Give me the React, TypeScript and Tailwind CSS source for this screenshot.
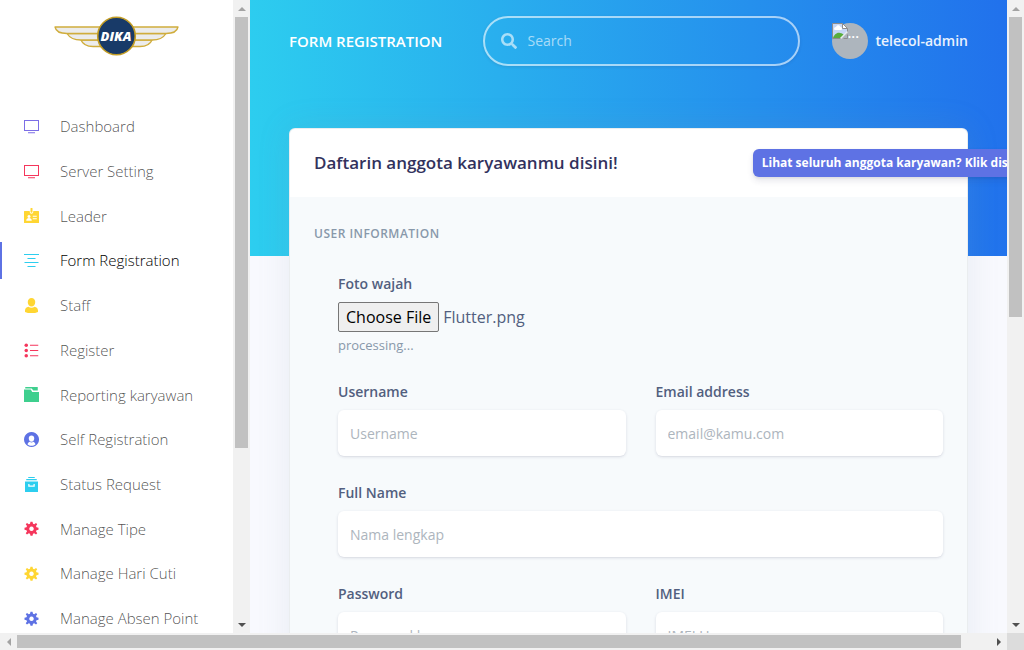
import { useId, useRef, useState } from "react";
import type { ReactNode } from "react";

function Svg({ children, className }: { children: ReactNode; className: string }) {
  return (
    <svg viewBox="0 0 60 60" aria-hidden="true" className={`size-[15px] shrink-0 ${className}`} fill="currentColor">
      {children}
    </svg>
  );
}

const Screen = () => (
  <>
    <path fillRule="evenodd" d="M0 4h60v44H0zM4 8v36h52V8z" />
    <path d="M16 53h28v4H16z" />
  </>
);
const Badge = () => (
  <path
    fillRule="evenodd"
    d="M2 12h21v4a7 7 0 0 0 14 0v-4h21a2 2 0 0 1 2 2v44a2 2 0 0 1-2 2H2a2 2 0 0 1-2-2V14a2 2 0 0 1 2-2zM26 3a4 4 0 0 1 8 0v12a4 4 0 0 1-8 0zM20 28a6 6 0 1 0 .1 0zM9 51h22c0-8-4-11-11-11S9 43 9 51zM35 31v4h16v-4zM35 41v4h16v-4z"
  />
);
const Lines = () => (
  <path d="M0 4h60v4H0zM14 20h32v4H14zM2 36h56v4H2zM14 52h32v4H14z" />
);
const Person = () => (
  <>
    <path d="M30 0c9 0 15 7 15 16 0 10-6 18-15 18s-15-8-15-18C15 7 21 0 30 0z" />
    <path d="M18 35c7 5 17 5 24 0 9 2 14 7 14 15v6c-7 4-16 4-26 4s-19 0-26-4v-6c0-8 5-13 14-15z" />
  </>
);
const Bullets = () => (
  <>
    <circle cx="9" cy="9" r="7" />
    <circle cx="9" cy="30" r="7" />
    <circle cx="9" cy="51" r="7" />
    <path d="M24 7h33v4H24zM24 28h33v4H24zM24 49h33v4H24z" />
  </>
);
const Folder = () => (
  <>
    <path d="M5 0h50v14H37l-6-8H5z" />
    <path d="M0 10h27l6 10h27v40H0z" />
  </>
);
const UserCircle = () => (
  <path
    fillRule="evenodd"
    d="M30 0a30 30 0 1 0 .1 0zM30 14c7 0 11 5 11 11 0 7-4 14-11 14s-11-7-11-14c0-6 4-11 11-11zM14 49c2-7 6-9 9-10 4 4 10 4 14 0 3 1 7 3 9 10-8 8-24 8-32 0z"
  />
);
const Archive = () => (
  <path
    fillRule="evenodd"
    d="M17 0h26v4H17zM9 8h42v5H9zM4 18h52v42H4zM17 28v11h26V28h-5v6H22v-6z"
  />
);
const Gear = () => (
  <path
    fillRule="evenodd"
    d="M26 3h8l2 8 5 2 7-5 5 5-5 7 2 5 8 2v8l-8 2-2 5 5 7-5 5-7-5-5 2-2 8h-8l-2-8-5-2-7 5-5-5 5-7-2-5-8-2v-8l8-2 2-5-5-7 5-5 7 5 5-2zM30 22a9 9 0 1 0 .1 0z"
  />
);

const items = [
  { label: "Dashboard", color: "text-[#7c6ee6]", icon: <Screen /> },
  { label: "Server Setting", color: "text-[#f5365c]", icon: <Screen /> },
  { label: "Leader", color: "text-[#ffd633]", icon: <Badge /> },
  { label: "Form Registration", color: "text-[#2dceef]", icon: <Lines />, active: true },
  { label: "Staff", color: "text-[#ffd633]", icon: <Person /> },
  { label: "Register", color: "text-[#f5365c]", icon: <Bullets /> },
  { label: "Reporting karyawan", color: "text-[#3ecf8e]", icon: <Folder /> },
  { label: "Self Registration", color: "text-[#5e72e4]", icon: <UserCircle /> },
  { label: "Status Request", color: "text-[#2dceef]", icon: <Archive /> },
  { label: "Manage Tipe", color: "text-[#f5365c]", icon: <Gear /> },
  { label: "Manage Hari Cuti", color: "text-[#ffd633]", icon: <Gear /> },
  { label: "Manage Absen Point", color: "text-[#5e72e4]", icon: <Gear /> },
];

function Logo() {
  return (
    <svg viewBox="0 0 126 40" role="img" aria-label="DIKA" className="h-10 w-[126px]">
      <g fill="#ececec" stroke="#d0ad3c" strokeWidth="1.3" strokeLinejoin="round">
        <path d="M46 24H27c2 5 7 6.500 12 6.500h8zM79 24h19c-2 5-7 6.500-12 6.500h-8z" />
        <path d="M46 17.500H13c3 5 8 6.500 14 6.500h19zM79 17.500h33c-3 5-8 6.500-14 6.500H79z" />
        <path d="M46 11H1c1 5 7 6.500 12 6.500h33zM79 11h45c-1 5-7 6.500-12 6.500H79z" />
      </g>
      <circle cx="62.500" cy="20" r="18.800" fill="#183a68" stroke="#c39d25" strokeWidth="1.600" />
      <text x="62" y="25" textAnchor="middle" fill="#fff" fontSize="13" fontWeight="800" fontStyle="italic" fontFamily="Open Sans, sans-serif">
        DIKA
      </text>
    </svg>
  );
}

function Arrow({ d, dim }: { d: string; dim?: boolean }) {
  return (
    <span className="flex size-[17px] shrink-0 items-center justify-center">
      <svg viewBox="0 0 8 8" aria-hidden="true" className={dim ? "size-2 text-[#a3a3a3]" : "size-2 text-[#505050]"} fill="currentColor">
        <path d={d} />
      </svg>
    </span>
  );
}

function VerticalBar({ thumb }: { thumb: string }) {
  return (
    <div aria-hidden="true" className="flex w-[17px] shrink-0 flex-col bg-[#f1f1f1]">
      <Arrow d="M0 6h8L4 2z" dim />
      <div className="min-h-0 flex-1 px-0.5">
        <div className={`bg-[#c1c1c1] ${thumb}`} />
      </div>
      <Arrow d="M0 2h8L4 6z" />
    </div>
  );
}

function HorizontalBar() {
  return (
    <div aria-hidden="true" className="flex h-[17px] shrink-0 bg-[#f1f1f1]">
      <Arrow d="M6 0v8L2 4z" dim />
      <div className="min-w-0 flex-1 py-0.5">
        <div className="h-full w-[97%] bg-[#c1c1c1]" />
      </div>
      <Arrow d="M2 0v8l4-4z" />
      <span className="w-[17px] bg-[#dcdcdc]" />
    </div>
  );
}

function Field({ label, placeholder, type = "text", wide }: { label: string; placeholder: string; type?: string; wide?: boolean }) {
  const id = useId();
  return (
    <div className={wide ? "col-span-2" : ""}>
      <label htmlFor={id} className="mb-2 block text-sm leading-[21px] font-semibold text-[#525f7f]">
        {label}
      </label>
      <input
        id={id}
        type={type}
        placeholder={placeholder}
        className="block h-[46px] w-full rounded-md bg-white px-3 text-sm text-[#8898aa] shadow-[0_1px_3px_rgba(50,50,93,0.15),0_1px_0_rgba(0,0,0,0.02)] outline-none placeholder:text-[#adb5bd]"
      />
    </div>
  );
}

function FileField() {
  const input = useRef<HTMLInputElement>(null);
  const [name, setName] = useState("Flutter.png");
  return (
    <div>
      <label htmlFor="photo" className="mb-2 block text-sm leading-[21px] font-semibold">
        Foto wajah
      </label>
      <div className="relative flex items-center gap-1 text-base leading-6">
        <input
          ref={input}
          id="photo"
          type="file"
          tabIndex={-1}
          className="sr-only"
          onChange={(e) => setName(e.target.files?.[0]?.name ?? name)}
        />
        <button
          type="button"
          onClick={() => input.current?.click()}
          className="h-[30px] rounded-xs border border-[#767676] bg-[#efefef] px-[7px] text-black"
        >
          Choose File
        </button>
        <span>{name}</span>
      </div>
      <p className="mt-[3px] text-[13px] leading-5 text-[#8898aa]">processing...</p>
    </div>
  );
}

function Sidebar() {
  return (
    <aside className="flex w-[250px] shrink-0 bg-white">
      <div className="min-w-0 flex-1 overflow-hidden">
        <a href="#home" className="flex justify-center pt-4">
          <Logo />
        </a>
        <nav className="mt-[52px]">
          <ul className="flex h-[529px] flex-col justify-between">
            {items.map((item) => (
              <li key={item.label}>
                <a
                  href="#page"
                  aria-current={item.active ? "page" : undefined}
                  className={
                    item.active
                      ? "flex h-[37px] items-center gap-[21px] border-l-2 border-[#5e72e4] pl-[22px] text-[15px] font-light text-black"
                      : "flex h-[37px] items-center gap-[21px] pl-6 text-[15px] font-light text-black/70"
                  }
                >
                  <Svg className={item.color}>{item.icon}</Svg>
                  {item.label}
                </a>
              </li>
            ))}
          </ul>
        </nav>
      </div>
      <VerticalBar thumb="h-[72%]" />
    </aside>
  );
}

function Avatar() {
  return (
    <span className="relative block size-9 rounded-full bg-[#adb5bd]">
      <svg viewBox="0 0 16 16" aria-hidden="true" className="absolute top-0 left-0 size-4">
        <path d="M.5.500h10l5 5v3l-7 7h-8z" fill="#c6d7f5" />
        <path d="M2.500 7c-1-2 0-3 1.500-3 1-2.500 4-2 4.500 0 2 0 2 3 .5 3z" fill="#fff" />
        <path d="M1 15c1-3 4-6 7-5 2 0 3 1 4 2l-3.500 3z" fill="#58ad3c" />
        <path d="M15.500 8.500l-7 7" stroke="#e9ecef" strokeWidth="1.500" />
        <path d="M8.500 15.500H.5V.500h10l5 5v3M15.500 11.500v4h-4" fill="none" stroke="#8d8d8d" />
        <path d="M10.500.500v5h5z" fill="#fff" stroke="#8d8d8d" />
      </svg>
      <span className="absolute top-0 left-4 text-sm leading-5 font-semibold text-white">...</span>
    </span>
  );
}

function Header() {
  return (
    <header className="flex h-[82px] items-center px-[39px] text-white">
      <h1 className="text-[15px] font-semibold whitespace-nowrap uppercase">
        <a href="#form">Form Registration</a>
      </h1>
      <label className="ml-auto flex h-[50px] w-[317px] items-center gap-[11px] rounded-full border-2 border-white/60 px-4 text-white/60 shadow-[0_1px_3px_rgba(50,50,93,0.15)]">
        <svg viewBox="0 0 512 512" aria-hidden="true" className="size-4 shrink-0" fill="currentColor">
          <path d="M505 442.700L405.300 343c-4.500-4.500-10.600-7-17-7H372c27.600-35.300 44-79.700 44-128C416 93.100 322.900 0 208 0S0 93.100 0 208s93.100 208 208 208c48.300 0 92.700-16.400 128-44v16.300c0 6.400 2.500 12.500 7 17l99.700 99.700c9.400 9.400 24.600 9.400 33.900 0l28.300-28.300c9.400-9.400 9.400-24.600.1-34zM208 336c-70.700 0-128-57.200-128-128 0-70.700 57.200-128 128-128 70.700 0 128 57.200 128 128 0 70.700-57.200 128-128 128z" />
        </svg>
        <input type="search" aria-label="Search" placeholder="Search" className="min-w-0 flex-1 bg-transparent text-sm outline-none placeholder:text-white/60" />
      </label>
      <button type="button" className="ml-8 flex items-center gap-2 text-sm font-semibold text-white/90">
        <Avatar />
        telecol-admin
      </button>
    </header>
  );
}

export default function App() {
  return (
    <div className="flex h-screen flex-col overflow-hidden font-['Open_Sans',sans-serif] text-[#525f7f]">
      <div className="flex min-h-0 flex-1">
        <Sidebar />
        <main className="min-w-0 flex-1 overflow-hidden bg-[#f8f9fe] bg-[linear-gradient(87deg,#2dceef,#2171ec)] bg-[length:100%_256px] bg-no-repeat">
          <Header />
          <section className="mx-[39px] mt-[46px] rounded-md border border-black/5 bg-[#f7fafc] shadow-[0_0_32px_rgba(136,152,170,0.15)]">
            <div className="flex h-[68px] items-center justify-between rounded-t-md bg-white px-6">
              <h2 className="text-[17px] font-semibold whitespace-nowrap text-[#32325d]">Daftarin anggota karyawanmu disini!</h2>
              <a
                href="#members"
                className="-mr-[89px] rounded-md bg-[#5e72e4] px-[9px] py-1 text-xs leading-5 font-bold whitespace-nowrap text-white shadow-[0_4px_6px_rgba(50,50,93,0.11),0_1px_3px_rgba(0,0,0,0.08)]"
              >
                Lihat seluruh anggota karyawan? Klik disini
              </a>
            </div>
            <form className="p-6">
              <h3 className="mt-1 text-xs leading-[18px] font-semibold tracking-[0.04em] text-[#8898aa] uppercase">User information</h3>
              <div className="pt-[30px] pl-6">
                <FileField />
                <div className="mt-[26px] grid grid-cols-2 gap-x-[30px] gap-y-[26px]">
                  <Field label="Username" placeholder="Username" />
                  <Field label="Email address" placeholder="email@kamu.com" type="email" />
                  <Field label="Full Name" placeholder="Nama lengkap" wide />
                  <Field label="Password" placeholder="Password kamu" type="password" />
                  <Field label="IMEI" placeholder="IMEI User" />
                </div>
              </div>
            </form>
          </section>
        </main>
        <VerticalBar thumb="h-[50%]" />
      </div>
      <HorizontalBar />
    </div>
  );
}
